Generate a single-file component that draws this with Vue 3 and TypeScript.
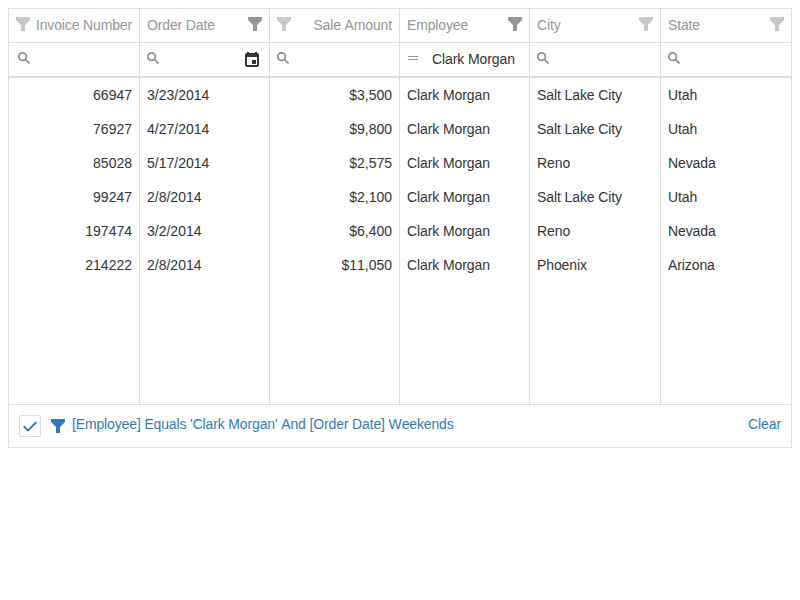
<script setup lang="ts">
interface Column {
  key: string
  caption: string
  right?: boolean
  active?: boolean
  filter: 'search' | 'equals'
  date?: boolean
  value?: string
}

const columns: Column[] = [
  { key: 'invoice', caption: 'Invoice Number', right: true, filter: 'search' },
  { key: 'date', caption: 'Order Date', active: true, filter: 'search', date: true },
  { key: 'amount', caption: 'Sale Amount', right: true, filter: 'search' },
  { key: 'employee', caption: 'Employee', active: true, filter: 'equals', value: 'Clark Morgan' },
  { key: 'city', caption: 'City', filter: 'search' },
  { key: 'state', caption: 'State', filter: 'search' },
]

const rows: Record<string, string>[] = [
  { invoice: '66947', date: '3/23/2014', amount: '$3,500', employee: 'Clark Morgan', city: 'Salt Lake City', state: 'Utah' },
  { invoice: '76927', date: '4/27/2014', amount: '$9,800', employee: 'Clark Morgan', city: 'Salt Lake City', state: 'Utah' },
  { invoice: '85028', date: '5/17/2014', amount: '$2,575', employee: 'Clark Morgan', city: 'Reno', state: 'Nevada' },
  { invoice: '99247', date: '2/8/2014', amount: '$2,100', employee: 'Clark Morgan', city: 'Salt Lake City', state: 'Utah' },
  { invoice: '197474', date: '3/2/2014', amount: '$6,400', employee: 'Clark Morgan', city: 'Reno', state: 'Nevada' },
  { invoice: '214222', date: '2/8/2014', amount: '$11,050', employee: 'Clark Morgan', city: 'Phoenix', state: 'Arizona' },
]

const funnel = 'M0 0h14v3L9 8v6H5V8L0 3z'
</script>

<template>
  <div class="grid">
    <div class="line header">
      <div v-for="c in columns" :key="c.key" class="cell" :class="{ right: c.right }">
        <span class="caption">{{ c.caption }}</span>
        <svg class="funnel" :class="{ active: c.active }" width="14" height="14" viewBox="0 0 14 14"><path :d="funnel" /></svg>
      </div>
    </div>
    <div class="line filters">
      <div v-for="c in columns" :key="c.key" class="cell" :class="{ wide: c.key === 'invoice' }">
        <svg v-if="c.filter === 'search'" class="search" width="12" height="12" viewBox="0 0 12 12">
          <circle cx="4.6" cy="4.6" r="3.8" /><path d="M7.3 7.3L11.5 11.5" />
        </svg>
        <svg v-else class="equals" width="10" height="5" viewBox="0 0 10 5"><path d="M0 .5h10M0 3.5h10" /></svg>
        <span v-if="c.value" class="value">{{ c.value }}</span>
        <svg v-if="c.date" class="calendar" width="14" height="15" viewBox="0 0 14 15">
          <path fill-rule="evenodd" d="M2 0h2v1h6V0h2v1q2 0 2 2v10q0 2-2 2H2q-2 0-2-2V3q0-2 2-2zM2 5v8h10V5zM7 8h4v4H7z" />
        </svg>
      </div>
    </div>
    <div class="body">
      <div v-for="r in rows" :key="r.invoice" class="line row">
        <div v-for="c in columns" :key="c.key" class="cell" :class="{ right: c.right, words: !c.right && !c.date }">{{ r[c.key] }}</div>
      </div>
      <div class="line free">
        <div v-for="c in columns" :key="c.key" class="cell"></div>
      </div>
    </div>
    <div class="panel">
      <div class="check">
        <svg width="14" height="11" viewBox="0 0 14 11"><path d="M.7 5.2L5 9.4 13.3 1.1" /></svg>
      </div>
      <svg class="funnel" width="14" height="14" viewBox="0 0 14 14"><path :d="funnel" /></svg>
      <span class="text">[Employee] Equals 'Clark Morgan' And [Order Date] Weekends</span>
      <span class="clear">Clear</span>
    </div>
  </div>
</template>

<style>
body {
  background: #fff;
}
</style>

<style scoped>
.grid {
  box-sizing: border-box;
  width: 784px;
  height: 440px;
  margin: 8px;
  border: 1px solid #ddd;
  display: flex;
  flex-direction: column;
  font-family: "Helvetica Neue", "Liberation Sans", Helvetica, sans-serif;
  font-size: 14px;
  line-height: 18px;
  font-kerning: none;
  color: #333;
}
svg {
  flex: none;
  display: block;
}
.line {
  display: grid;
  grid-template-columns: 131px 130px 130px 130px 131px 130px;
}
.cell {
  box-sizing: border-box;
  display: flex;
  align-items: center;
  padding: 0 7px;
  border-right: 1px solid #ddd;
  white-space: nowrap;
}
.cell:last-child {
  border-right: 0;
}
.header {
  height: 33px;
  color: #959595;
  border-bottom: 1px solid #ddd;
}
.header .cell {
  justify-content: space-between;
}
.header .cell.right {
  flex-direction: row-reverse;
}
.caption {
  letter-spacing: -0.14px;
  margin-bottom: 2px;
}
.funnel {
  fill: #c8c8c8;
  margin-bottom: 3px;
}
.funnel.active {
  fill: #959595;
}
.filters {
  height: 33px;
  border-bottom: 2px solid #ddd;
}
.filters .cell.wide {
  padding-left: 9px;
}
.search {
  fill: none;
  stroke: #8f8f8f;
  stroke-width: 1.7;
  margin-bottom: 3px;
}
.equals {
  stroke: #959595;
  stroke-width: 1;
  margin: 0 14px 2px 1px;
}
.value {
  letter-spacing: -0.1px;
  margin-bottom: 2px;
}
.calendar {
  fill: #333;
  margin: 0 3px 0 auto;
}
.body {
  flex: 1;
  display: flex;
  flex-direction: column;
}
.row {
  height: 34px;
}
.row .cell.right {
  justify-content: flex-end;
}
.row .cell.words {
  letter-spacing: -0.1px;
}
.free {
  flex: 1;
}
.panel {
  box-sizing: border-box;
  height: 43px;
  border-top: 1px solid #ddd;
  padding: 10px;
  display: flex;
  align-items: flex-start;
  color: #337ab7;
}
.check {
  box-sizing: border-box;
  width: 22px;
  height: 22px;
  border: 1px solid #ddd;
  border-radius: 2px;
  display: flex;
  align-items: center;
  justify-content: center;
}
.check svg {
  margin-top: 1px;
}
.check path {
  fill: none;
  stroke: #337ab7;
  stroke-width: 2;
}
.panel .funnel {
  fill: #337ab7;
  margin: 4px 7px 0 10px;
}
.text {
  letter-spacing: -0.14px;
}
.clear {
  margin-left: auto;
  letter-spacing: -0.1px;
}
</style>
